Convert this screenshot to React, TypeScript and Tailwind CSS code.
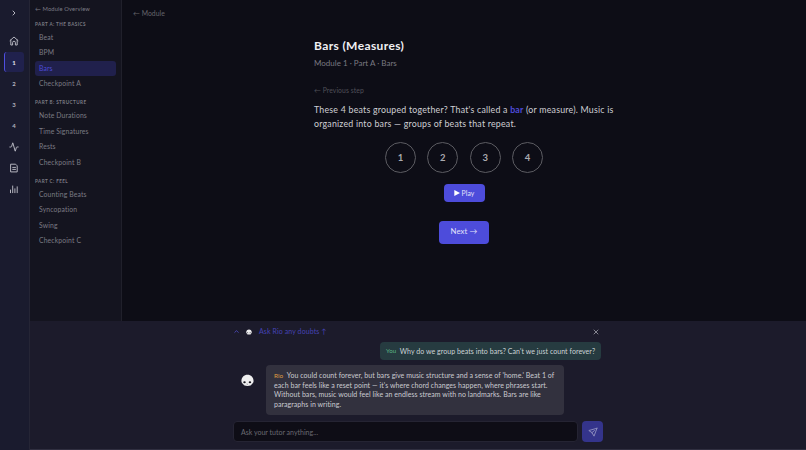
import { Activity, ChevronRight, ChevronUp, X } from "lucide-react";
import clsx from "clsx";

const sections = [
  { title: "PART A: THE BASICS", items: ["Beat", "BPM", "Bars", "Checkpoint A"] },
  { title: "PART B: STRUCTURE", items: ["Note Durations", "Time Signatures", "Rests", "Checkpoint B"] },
  { title: "PART C: FEEL", items: ["Counting Beats", "Syncopation", "Swing", "Checkpoint C"] },
];

// Rail icons, all on a 10x10 grid
function RailIcon({ d }: { d: string }) {
  return (
    <svg
      className="size-[10px]"
      viewBox="0 0 10 10"
      fill="none"
      stroke="currentColor"
      strokeWidth="1"
      strokeLinejoin="round"
      strokeLinecap="round"
    >
      <path d={d} />
    </svg>
  );
}

const HOUSE = "M1 4.6 5 1l4 3.600M1.800 4V9H3.600V6.600a1.400 1.400 0 0 1 2.800 0V9H8.200V4";
const SHEET = "M2 1.200H6.600L8.200 2.800V8.900H2ZM3.700 4.400H6.500M3.700 6.400H6.500";
const BARS = "M1.500 6V8.700M3.700 2V8.700M5.900 4.800V8.700M8.200 2.800V8.700";

function Rail() {
  return (
    <nav className="flex w-[30px] shrink-0 flex-col items-center border-r border-[#252535] bg-[#1a1b2e] text-[#b4b4be]">
      <ChevronRight className="mt-[9px] mr-px size-[8px]" strokeWidth={3} />
      <div className="mt-[14.4px] flex w-full flex-col gap-[1.1px]">
        <div className="mr-[2px] flex h-5 items-center justify-center">
          <RailIcon d={HOUSE} />
        </div>
        {["1", "2", "3", "4"].map((n) => (
          <div
            key={n}
            className={clsx(
              "ml-1 flex h-5 w-5 items-center justify-center rounded-[3px] border-l pr-px text-[6px] font-bold",
              n === "1" ? "border-[#4f4fe0] bg-[#20214d] text-[#e4e4ee]" : "border-transparent",
            )}
          >
            {n}
          </div>
        ))}
        <div className="mr-[2px] flex h-5 items-center justify-center">
          <Activity className="size-[10px]" strokeWidth={2.4} />
        </div>
        <div className="mr-[2px] flex h-5 items-center justify-center">
          <RailIcon d={SHEET} />
        </div>
        <div className="mr-[2px] flex h-5 items-center justify-center">
          <RailIcon d={BARS} />
        </div>
      </div>
    </nav>
  );
}

function Sidebar() {
  return (
    <aside className="w-[92px] shrink-0 border-r border-[#20202b] bg-[#14141f] pt-[5px] pr-[5.5px] pl-[5px] text-[#7b7b84]">
      <div className="h-2 text-[5.8px] leading-2 tracking-[0.12px] whitespace-nowrap">← Module Overview</div>
      {sections.map((section, i) => (
        <div key={section.title} className={i === 0 ? "mt-[7px]" : "mt-[6.9px]"}>
          <h2 className="h-2 text-[4.6px] leading-2 font-bold tracking-[0.43px] whitespace-nowrap">{section.title}</h2>
          <ul className="mt-[2px] flex flex-col">
            {section.items.map((item) => (
              <li
                key={item}
                className={clsx(
                  "h-[15.4px] rounded-[3px] pl-1 text-[6.8px] leading-[15.4px] tracking-[0.14px] whitespace-nowrap",
                  item === "Bars" && "bg-[#20204c] text-[#4d4bd6]",
                )}
              >
                {item}
              </li>
            ))}
          </ul>
        </div>
      ))}
    </aside>
  );
}

function Lesson() {
  return (
    <main className="flex-1 bg-[#0d0d16] pt-2">
      <div className="ml-[11px] h-[10px] text-[6.8px] leading-[10px] tracking-[0.06px] text-[#65656c]">← Module</div>
      <div className="mx-auto mt-5 w-[300px] whitespace-nowrap">
        <h1 className="h-[15px] text-[12px] leading-[15px] font-bold tracking-[0.38px] text-[#f0f0f3]">
          Bars (Measures)
        </h1>
        <p className="mt-1 h-3 text-[8px] leading-3 text-[#7a7a82]">Module 1 · Part A · Bars</p>
        <div className="mt-4 h-[10px] text-[6.8px] leading-[10px] tracking-[0.08px] text-[#505058]">
          ← Previous step
        </div>
        <p className="mt-2 text-[8.8px] leading-[14.4px] tracking-[0.22px] text-[#cfcfd4]">
          These 4 beats grouped together? That's called a <span className="font-bold text-[#4d4bd9]">bar</span> (or
          measure). Music is
          <br />
          organized into bars — groups of beats that repeat.
        </p>
        <div className="mt-[10px] flex justify-center gap-[11.4px]">
          {[1, 2, 3, 4].map((beat) => (
            <div
              key={beat}
              className="flex size-[31px] items-center justify-center rounded-full border border-[#5c5c62] pt-px text-[9.5px] font-bold text-[#aaaab0]"
            >
              {beat}
            </div>
          ))}
        </div>
        <div className="mt-[11px] flex flex-col items-center text-[#e2e2fa]">
          <button className="flex h-[18px] w-[41px] items-center justify-center gap-[2px] rounded-[4px] bg-[#4d4cdb] text-[6.8px] tracking-[0.1px]">
            <svg className="h-[6px] w-[6px] fill-white" viewBox="0 0 6 6">
              <path d="M0.300 0 6 3 0.300 6Z" />
            </svg>
            Play
          </button>
          <button className="mt-[19px] h-[23px] w-[50px] rounded-[4px] bg-[#4d4cdb] text-[7.8px] tracking-[0.1px]">
            Next →
          </button>
        </div>
      </div>
    </main>
  );
}

function Rio({ className }: { className?: string }) {
  return (
    <svg className={className} viewBox="0 0 24 24">
      <path
        d="M12 1.500C5.500 1.500.8 6.500.8 13c0 2.700 1.200 4.500 3.200 5.500 1 2.800 3.500 3.500 8 3.500s7-.7 8-3.500c2-1 3.200-2.800 3.200-5.500C23.200 6.500 18.500 1.500 12 1.500Z"
        fill="#eeeeef"
      />
      <ellipse cx="6.500" cy="15.200" rx="2.300" ry="1.900" fill="#17171f" />
      <ellipse cx="16.500" cy="15.200" rx="2.300" ry="1.900" fill="#17171f" />
      <path d="M10.300 18.500q1.300 1 2.600 0" fill="none" stroke="#555560" />
    </svg>
  );
}

function TutorPanel() {
  return (
    <section className="h-[129px] shrink-0 border-b border-[#302f40] bg-[#1c1b2b]">
      <div className="mx-auto w-[370px] pt-[5px] whitespace-nowrap">
        <div className="flex h-[11px] items-center text-[7px] tracking-[0.1px] text-[#4643b5]">
          <ChevronUp className="size-[7px] text-[#4f4cc4]" strokeWidth={2.8} />
          <Rio className="ml-[6px] size-[6px]" />
          <span className="ml-[7px]">Ask Rio any doubts ↑</span>
          <X className="mr-[3px] ml-auto size-[8px] text-[#a0a0aa]" strokeWidth={2.4} />
        </div>
        <div className="mt-[5px] mr-[2px] ml-auto flex h-[18px] w-[221px] items-center rounded-[4px] bg-[#263b40] pl-[6px] text-[7px] tracking-[0.05px] text-[#cdd4d7]">
          <span className="mr-[3.5px] text-[6.2px] text-[#5ab384]">You</span>
          Why do we group beats into bars? Can't we just count forever?
        </div>
        <div className="mt-[5px] flex">
          <Rio className="mt-[9px] ml-2 size-[13px]" />
          <div className="ml-3 h-[50px] w-[298px] rounded-[4px] bg-[#32313e] pt-[6px] pl-2 text-[7px] leading-[9.6px] tracking-[0.05px] text-[#cbcbd1]">
            <span className="mr-[3.5px] text-[6.4px] text-[#df9c43]">Rio</span>
            You could count forever, but bars give music structure and a sense of 'home.' Beat 1 of
            <br />
            each bar feels like a reset point — it's where chord changes happen, where phrases start.
            <br />
            Without bars, music would feel like an endless stream with no landmarks. Bars are like
            <br />
            paragraphs in writing.
          </div>
        </div>
        <div className="mt-[6px] flex gap-1">
          <div className="h-[21px] w-[345px] rounded-[4px] border border-[#252433] bg-[#0e0d16] pl-[7px] text-[7px] leading-[20px] text-[#6a6a72]">
            Ask your tutor anything...
          </div>
          <button className="flex size-[21px] items-center justify-center rounded-[4px] bg-[#34348b]">
            <svg
              className="size-[10px]"
              viewBox="0 0 24 24"
              fill="none"
              stroke="#9191c0"
              strokeWidth="2.200"
              strokeLinejoin="round"
              strokeLinecap="round"
            >
              <path d="M21.500 3 2 8.500 9.500 13.500 14.500 22 21.500 3ZM9.500 13.500 15.500 8.500" />
            </svg>
          </button>
        </div>
      </div>
    </section>
  );
}

export default function App() {
  return (
    <div className="flex h-[450px] w-[806px] overflow-hidden bg-[#0d0d16] font-[Lato,'DejaVu_Sans',sans-serif]">
      <Rail />
      <div className="flex min-w-0 flex-1 flex-col">
        <div className="flex min-h-0 flex-1">
          <Sidebar />
          <Lesson />
        </div>
        <TutorPanel />
      </div>
    </div>
  );
}
